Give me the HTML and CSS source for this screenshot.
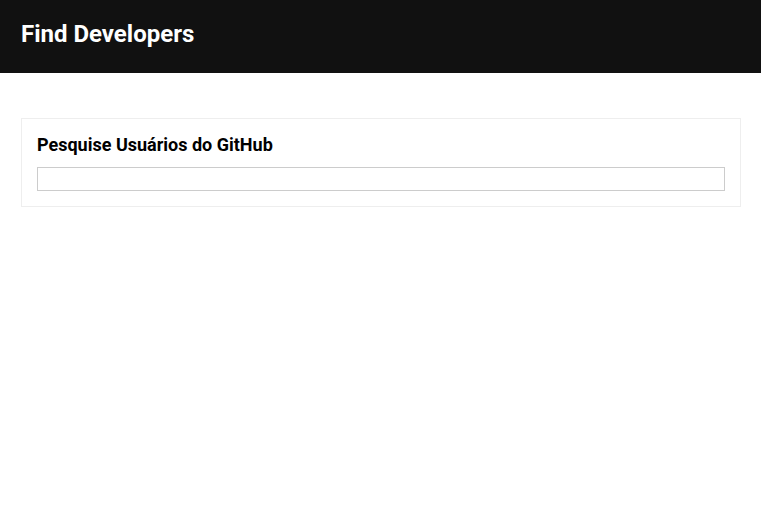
FILE: index.html
```html
<!DOCTYPE html>
<html>
<head>
<meta charset="utf-8">
<link rel="stylesheet" href="styles.css">
</head>
<body>
<header class="topbar"><h1 class="brand">Find Developers</h1></header>
<main class="content">
  <section class="card">
    <h2 class="card-title">Pesquise Usuários do GitHub</h2>
    <input class="search" type="text">
  </section>
</main>
</body>
</html>
```
FILE: styles.css
```css
html, body { margin: 0; padding: 0; background: #fff; }
body { font-family: Roboto, "Liberation Sans", sans-serif; }
.topbar {
  background: #111;
  height: 73px;
  display: flex;
  align-items: center;
  padding: 0 0 5px 21px;
  box-sizing: border-box;
}
.brand {
  margin: 0;
  color: #fff;
  font-size: 24px;
  font-weight: 700;
  line-height: 28px;
}
.content { padding: 45px 20px 0 21px; }
.card {
  border: 1px solid #eee;
  padding: 15px;
  display: flex;
  flex-direction: column;
}
.card-title {
  margin: 0 0 12px;
  font-size: 18px;
  line-height: 21px;
  font-weight: 700;
  color: #000;
}
.search {
  margin: 0;
  height: 24px;
  box-sizing: border-box;
  border: 1px solid #ccc;
  padding: 0 4px;
  outline: none;
  font-family: inherit;
}
```
